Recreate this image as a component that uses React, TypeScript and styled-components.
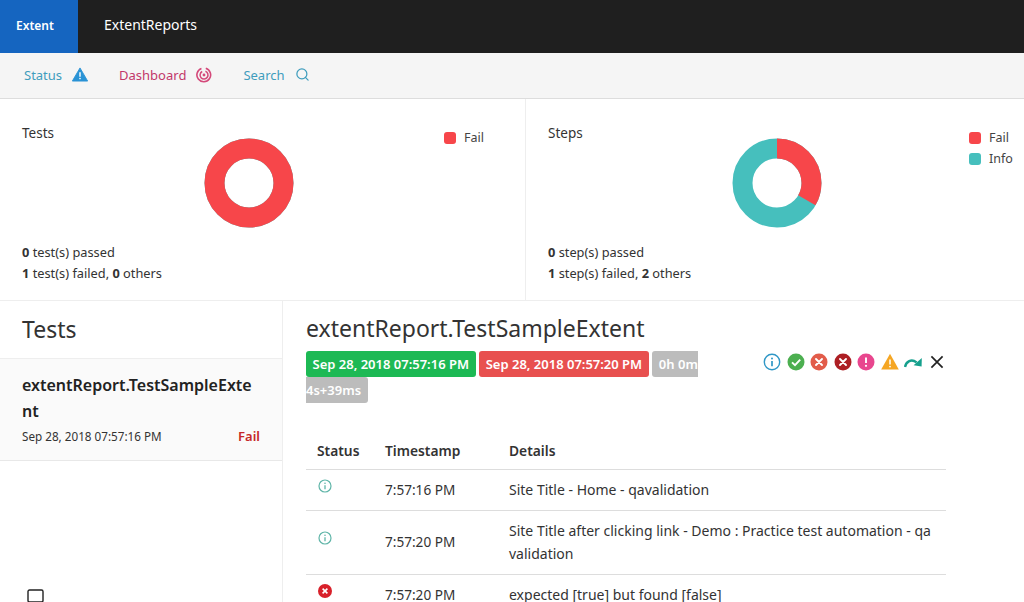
import React from "react";
import styled, { createGlobalStyle } from "styled-components";
import { Search } from "lucide-react";

const font = `"Noto Sans", "Open Sans", "Liberation Sans", sans-serif`;

const GlobalStyle = createGlobalStyle`
  html, body {
    margin: 0;
    padding: 0;
    height: 602px;
    overflow: hidden;
    background: #fff;
  }
  body {
    font-family: ${font};
    color: #333;
  }
`;

const rows = [
  { status: "info", time: "7:57:16 PM", details: "Site Title - Home - qavalidation" },
  {
    status: "info",
    time: "7:57:20 PM",
    details: "Site Title after clicking link - Demo : Practice test automation - qa validation",
  },
  { status: "fail", time: "7:57:20 PM", details: "expected [true] but found [false]" },
];

const Donut: React.FC<{ failShare: number }> = ({ failShare }) => {
  const len = 2 * Math.PI * 34.5;
  return (
    <DonutSvg viewBox="0 0 90 90">
      <circle cx="45" cy="45" r="34.5" fill="none" stroke="#46bfbd" strokeWidth="20" />
      <circle
        cx="45"
        cy="45"
        r="34.5"
        fill="none"
        stroke="#f7464a"
        strokeWidth="20"
        strokeDasharray={`${len * failShare} ${len}`}
        transform="rotate(-90 45 45)"
      />
    </DonutSvg>
  );
};

const Cross = ({ color = "#fff" }: { color?: string }) => (
  <path d="M6 6l6 6M12 6l-6 6" stroke={color} strokeWidth="1.9" strokeLinecap="round" fill="none" />
);

const FilterIcons = () => (
  <Filters>
    <FilterIcon viewBox="0 0 18 18">
      <circle cx="9" cy="9" r="7.7" fill="none" stroke="#2f97c6" strokeWidth="1.4" />
      <circle cx="9" cy="5.4" r="1" fill="#2f97c6" />
      <path d="M9 8v5.2" stroke="#2f97c6" strokeWidth="1.7" />
    </FilterIcon>
    <FilterIcon viewBox="0 0 18 18">
      <circle cx="9" cy="9" r="8.5" fill="#4caf50" />
      <path d="M5 9.4l3 2.8 5.2-5.6" stroke="#fff" strokeWidth="1.9" fill="none" />
    </FilterIcon>
    <FilterIcon viewBox="0 0 18 18">
      <circle cx="9" cy="9" r="8.5" fill="#e25c4a" />
      <Cross />
    </FilterIcon>
    <FilterIcon viewBox="0 0 18 18">
      <circle cx="9" cy="9" r="8.5" fill="#ad1f24" />
      <Cross />
    </FilterIcon>
    <FilterIcon viewBox="0 0 18 18">
      <circle cx="9" cy="9" r="8.5" fill="#e8468e" />
      <path d="M9 4.6v5.4" stroke="#fff" strokeWidth="1.9" />
      <circle cx="9" cy="12.8" r="1.1" fill="#fff" />
    </FilterIcon>
    <FilterIcon viewBox="0 0 18 18">
      <path d="M9 .8L17.8 16.6H.2z" fill="#f5a623" />
      <path d="M9 6.6v5" stroke="#fff" strokeWidth="1.5" />
      <circle cx="9" cy="13.6" r=".9" fill="#fff" />
    </FilterIcon>
    <FilterIcon viewBox="0 0 18 18">
      <path d="M1 14C2 8.4 7.4 5.4 12.6 9.4" stroke="#16a08d" strokeWidth="2.4" fill="none" />
      <path d="M17.8 5l-.2 8.6-8-1.4z" fill="#16a08d" />
    </FilterIcon>
    <FilterIcon viewBox="0 0 18 18">
      <path d="M3.4 3.4l11.2 11.2M14.6 3.4L3.4 14.6" stroke="#222" strokeWidth="1.7" />
    </FilterIcon>
  </Filters>
);

const App: React.FC = () => (
  <Page>
    <GlobalStyle />
    <TopBar>
      <Brand>Extent</Brand>
      <ReportName>ExtentReports</ReportName>
    </TopBar>
    <SubNav>
      <NavItem $color="#3f9dbd">
        Status
        <svg width="16" height="15" viewBox="0 0 18 16">
          <path d="M9 .6L17.6 15.4H.4z" fill="#2a93d5" stroke="#2a93d5" strokeLinejoin="round" />
          <path d="M9 5.6v5" stroke="#fff" strokeWidth="1.6" />
          <circle cx="9" cy="12.6" r=".9" fill="#fff" />
        </svg>
      </NavItem>
      <NavItem $color="#c2386a">
        Dashboard
        <svg width="16" height="16" viewBox="0 0 17 17" fill="none" stroke="#d4497a">
          <path d="M10.4 1.4a7.3 7.3 0 1 1-4.6.1" strokeWidth="1.7" />
          <path d="M10 4.6a4.2 4.2 0 1 1-3.4.2" strokeWidth="1.6" />
          <circle cx="8.5" cy="8.5" r="1.5" fill="#d4497a" stroke="none" />
        </svg>
      </NavItem>
      <NavItem $color="#3f9dbd">
        Search
        <Search size={15} color="#3f9dbd" strokeWidth={2} />
      </NavItem>
    </SubNav>
    <Cards>
      <Card>
        <CardTop>
          <CardTitle $w={182}>Tests</CardTitle>
          <Donut failShare={1} />
          <Legend $offset={150}>
            <LegendRow>
              <LegendDot $color="#f7464a" />
              Fail
            </LegendRow>
          </Legend>
        </CardTop>
        <Summary>
          <div>
            <b>0</b> test(s) passed
          </div>
          <div>
            <b>1</b> test(s) failed, <b>0</b> others
          </div>
        </Summary>
      </Card>
      <Card>
        <CardTop>
          <CardTitle $w={184}>Steps</CardTitle>
          <Donut failShare={1 / 3} />
          <Legend $offset={147}>
            <LegendRow>
              <LegendDot $color="#f7464a" />
              Fail
            </LegendRow>
            <LegendRow>
              <LegendDot $color="#46bfbd" />
              Info
            </LegendRow>
          </Legend>
        </CardTop>
        <Summary>
          <div>
            <b>0</b> step(s) passed
          </div>
          <div>
            <b>1</b> step(s) failed, <b>2</b> others
          </div>
        </Summary>
      </Card>
    </Cards>
    <Split>
      <TestList>
        <ListTitle>Tests</ListTitle>
        <TestItem>
          <TestName>extentReport.TestSampleExtent</TestName>
          <TestMeta>
            <span>Sep 28, 2018 07:57:16 PM</span>
            <FailText>Fail</FailText>
          </TestMeta>
        </TestItem>
        <ListFooter>
          <svg width="18" height="13" viewBox="0 0 18 13" fill="none">
            <rect x="2" y="1" width="15" height="12" rx="1.5" stroke="#222" strokeWidth="1.4" />
          </svg>
        </ListFooter>
      </TestList>
      <Detail>
        <DetailTitle>extentReport.TestSampleExtent</DetailTitle>
        <DetailHead>
          <Badges>
            <Badge $bg="#1db954">Sep 28, 2018 07:57:16 PM</Badge> <Badge $bg="#e8504f">Sep 28, 2018 07:57:20 PM</Badge>{" "}
            <Badge $bg="#bcbcbc">0h 0m 4s+39ms</Badge>
          </Badges>
          <FilterIcons />
        </DetailHead>
        <LogTable>
          <thead>
            <tr>
              <Th $w={68}>Status</Th>
              <Th $w={124}>Timestamp</Th>
              <Th>Details</Th>
            </tr>
          </thead>
          <tbody>
            {rows.map((row, i) => (
              <tr key={i}>
                <StatusCell>
                  {row.status === "info" ? (
                    <svg width="14" height="14" viewBox="0 0 14 14">
                      <circle cx="7" cy="7" r="6" fill="none" stroke="#5fb5a8" strokeWidth="1.2" />
                      <circle cx="7" cy="4.2" r=".8" fill="#5fb5a8" />
                      <path d="M7 6.2v4" stroke="#5fb5a8" strokeWidth="1.3" />
                    </svg>
                  ) : (
                    <svg width="14" height="14" viewBox="0 0 14 14">
                      <circle cx="7" cy="7" r="7" fill="#d8202a" />
                      <path d="M4.6 4.6l4.8 4.8M9.4 4.6l-4.8 4.8" stroke="#fff" strokeWidth="1.6" />
                    </svg>
                  )}
                </StatusCell>
                <TimeCell>{row.time}</TimeCell>
                <Td>{row.details}</Td>
              </tr>
            ))}
          </tbody>
        </LogTable>
      </Detail>
    </Split>
  </Page>
);

const Page = styled.div`
  width: 1024px;
  height: 602px;
  display: flex;
  flex-direction: column;
  overflow: hidden;
  background: #fff;
`;

const TopBar = styled.header`
  height: 53px;
  flex: none;
  display: flex;
  align-items: center;
  background: #1f1f1f;
`;

const Brand = styled.div`
  width: 78px;
  height: 100%;
  display: flex;
  align-items: center;
  padding: 0 0 3px 16px;
  box-sizing: border-box;
  background: #1565c0;
  color: #fff;
  font-size: 12px;
  font-weight: 600;
`;

const ReportName = styled.div`
  margin: 0 0 5px 26px;
  color: #fff;
  font-size: 14px;
`;

const SubNav = styled.nav`
  height: 46px;
  flex: none;
  display: flex;
  align-items: center;
  gap: 31px;
  padding: 0 0 2px 24px;
  box-sizing: border-box;
  background: #f5f5f5;
  border-bottom: 1px solid #ddd;
`;

const NavItem = styled.a<{ $color: string }>`
  display: flex;
  align-items: center;
  gap: 10px;
  color: ${({ $color }) => $color};
  font-size: 13px;
`;

const Cards = styled.section`
  height: 202px;
  flex: none;
  display: grid;
  grid-template-columns: 526px 1fr;
  box-sizing: border-box;
  border-bottom: 1px solid #eee;
`;

const Card = styled.div`
  padding: 26px 0 0 22px;
  display: flex;
  flex-direction: column;
  border-right: 1px solid #eee;
  &:last-child {
    border-right: 0;
  }
`;

const CardTop = styled.div`
  display: flex;
  align-items: flex-start;
  height: 103px;
`;

const CardTitle = styled.div<{ $w: number }>`
  width: ${({ $w }) => $w}px;
  flex: none;
  font-size: 13.5px;
  line-height: 17px;
`;

const DonutSvg = styled.svg`
  width: 90px;
  height: 90px;
  flex: none;
  margin-top: 13px;
`;

const Legend = styled.div<{ $offset: number }>`
  margin-left: ${({ $offset }) => $offset}px;
  padding-top: 2px;
`;

const LegendRow = styled.div`
  display: flex;
  align-items: center;
  gap: 8px;
  height: 21px;
  font-size: 12.5px;
  color: #444;
`;

const LegendDot = styled.span<{ $color: string }>`
  width: 12px;
  height: 12px;
  border-radius: 3px;
  background: ${({ $color }) => $color};
`;

const Summary = styled.div`
  margin-top: 14px;
  font-size: 12.8px;
  line-height: 21px;
  color: #333;
`;

const Split = styled.div`
  flex: 1;
  min-height: 0;
  display: flex;
`;

const TestList = styled.aside`
  width: 283px;
  flex: none;
  display: flex;
  flex-direction: column;
  box-sizing: border-box;
  border-right: 1px solid #eee;
`;

const ListTitle = styled.div`
  height: 57px;
  padding: 12px 0 0 22px;
  box-sizing: border-box;
  font-size: 23px;
  line-height: 32px;
  color: #333;
`;

const TestItem = styled.div`
  height: 103px;
  box-sizing: border-box;
  padding: 13px 22px 0;
  background: #fafafa;
  border-top: 1px solid #eee;
  border-bottom: 1px solid #e8e8e8;
`;

const TestName = styled.div`
  max-width: 234px;
  font-size: 16px;
  font-weight: 600;
  line-height: 26px;
  word-break: break-all;
  color: #222;
`;

const TestMeta = styled.div`
  display: flex;
  justify-content: space-between;
  align-items: center;
  margin-top: 2px;
  font-size: 11.7px;
  line-height: 20px;
`;

const FailText = styled.span`
  color: #c62828;
  font-size: 13px;
  font-weight: 600;
`;

const ListFooter = styled.div`
  margin-top: auto;
  padding-left: 26px;
  line-height: 0;
`;

const Detail = styled.main`
  flex: 1;
  min-width: 0;
  padding: 11px 78px 0 23px;
`;

const DetailTitle = styled.h2`
  margin: 0;
  font-size: 23px;
  font-weight: 400;
  line-height: 32px;
  color: #333;
`;

const DetailHead = styled.div`
  display: flex;
  align-items: flex-start;
  margin-top: 7px;
  height: 81px;
`;

const Badges = styled.div`
  width: 394px;
  flex: none;
  line-height: 25px;
  font-size: 14px;
`;

const Badge = styled.span<{ $bg: string }>`
  background: ${({ $bg }) => $bg};
  color: #fff;
  font-weight: 600;
  padding: 4px 6.5px;
  border-radius: 3px;
  font-size: 13px;
`;

const Filters = styled.div`
  margin-left: 63px;
  margin-top: 2px;
  display: flex;
  gap: 5.5px;
`;

const FilterIcon = styled.svg`
  width: 18px;
  height: 18px;
  flex: none;
`;

const LogTable = styled.table`
  width: 640px;
  border-collapse: collapse;
  table-layout: fixed;
`;

const Th = styled.th<{ $w?: number }>`
  ${({ $w }) => $w && `width: ${$w}px;`}
  box-sizing: border-box;
  height: 37px;
  padding: 0 0 0 11px;
  text-align: left;
  font-weight: 600;
  font-size: 13.8px;
  border-bottom: 1px solid #ddd;
`;

const Td = styled.td`
  padding: 8px 11px 9px;
  line-height: 23px;
  font-size: 14px;
  border-bottom: 1px solid #ddd;
`;

const TimeCell = styled(Td)`
  font-size: 13.6px;
`;

const StatusCell = styled(Td)`
  vertical-align: middle;
  padding: 7px 0 15px 12px;
  line-height: 0;
`;

export default App;
